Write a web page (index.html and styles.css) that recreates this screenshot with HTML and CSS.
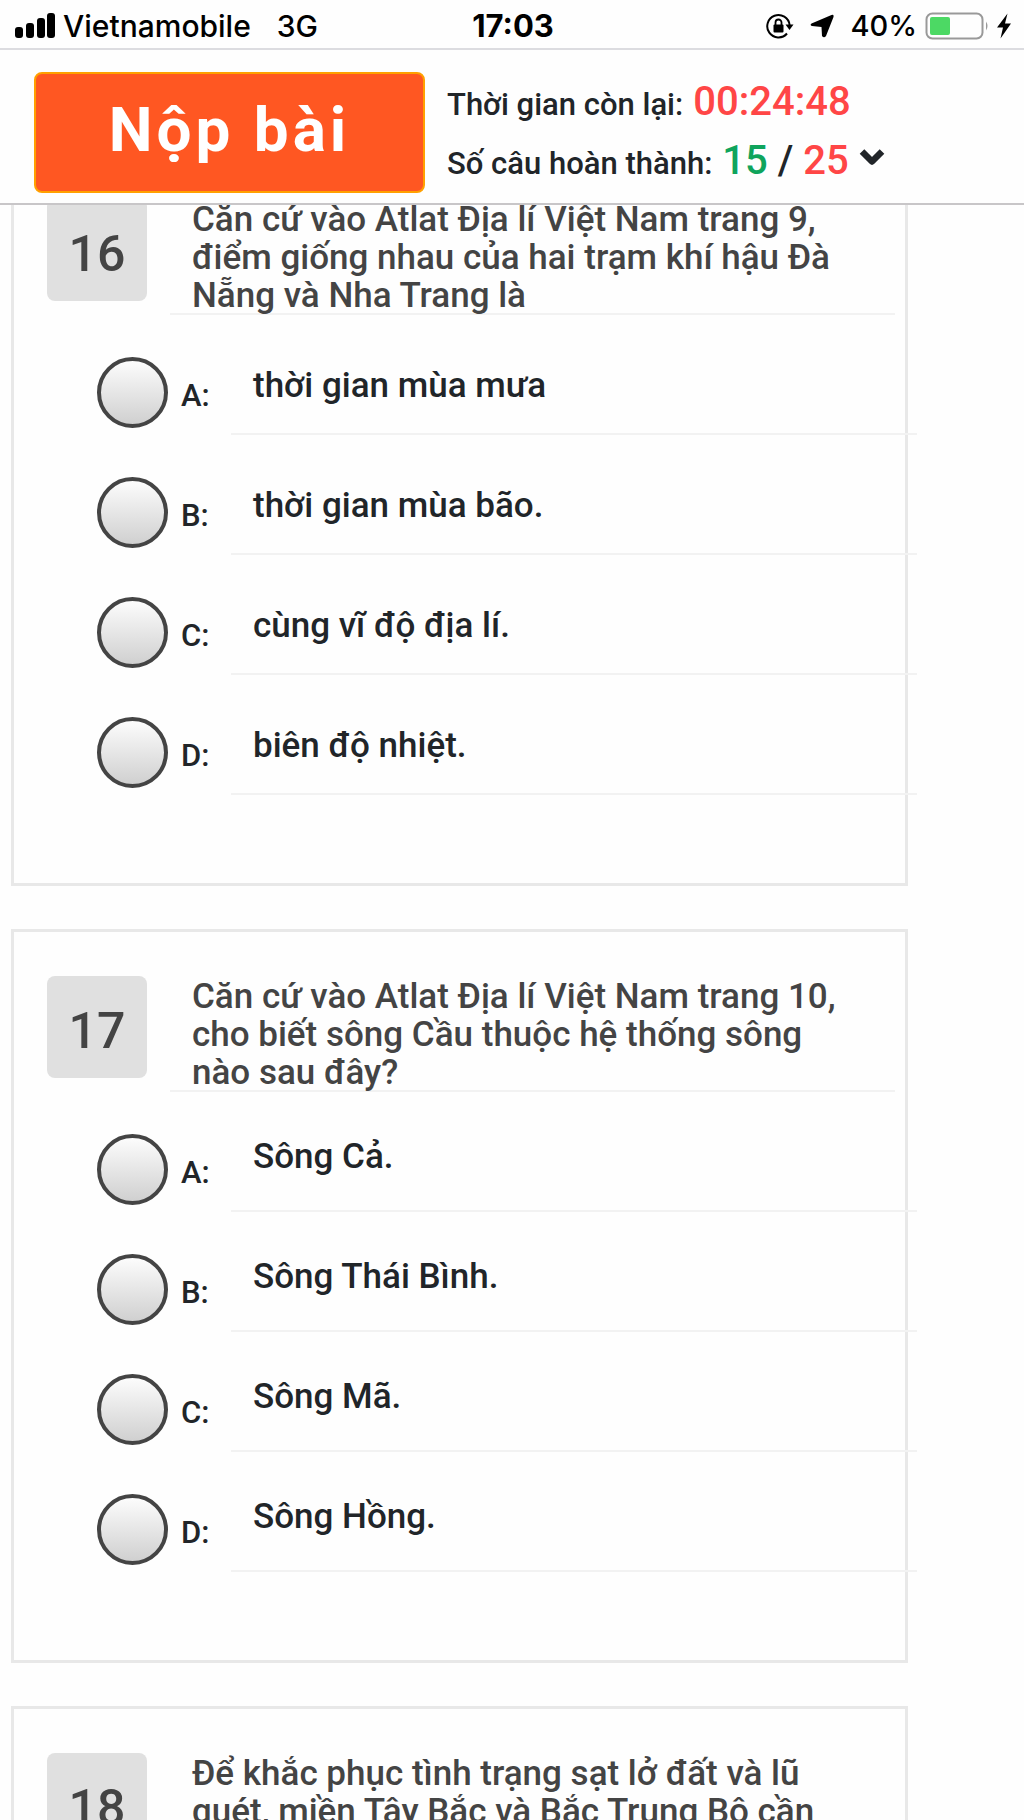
FILE: index.html
```html
<!DOCTYPE html>
<html lang="vi">
<head>
<meta charset="utf-8">
<meta name="viewport" content="width=device-width, initial-scale=1">
<title>Bài thi Địa lí</title>
<link rel="stylesheet" href="styles.css">
</head>
<body>
<div class="status">
  <div class="status-left">
    <svg width="40" height="25" viewBox="0 0 40 25" aria-hidden="true"><rect x="0" y="14" width="8" height="11" rx="3"/><rect x="11" y="10" width="8" height="15" rx="3"/><rect x="22" y="5" width="8" height="20" rx="3"/><rect x="32" y="0" width="8" height="25" rx="3"/></svg>
    <span class="carrier">Vietnamobile</span>
    <span>3G</span>
  </div>
  <div class="status-time">17:03</div>
  <div class="status-right">
    <svg width="28" height="26" viewBox="0 0 28 26" aria-hidden="true"><path d="M21 20.500A11.200 11.200 0 1 1 23.600 12" fill="none" stroke="#000" stroke-width="2"/><path d="M19.500 11.500h8L23.500 17z"/><rect x="7.500" y="11.500" width="10" height="8" rx="1"/><path d="M9.500 12V9.500a3 3 0 0 1 6 0V12" fill="none" stroke="#000" stroke-width="1.800"/></svg>
    <svg class="locate" width="24" height="24" viewBox="0 0 24 24" aria-hidden="true"><path d="M21.500 1Q24 0 23.500 3L16 22Q14 24.500 12 22L11.500 13L2 12Q-0.500 11 1.500 9.500z"/></svg>
    <span class="percent">40%</span>
    <svg class="battery" width="64" height="28" viewBox="0 0 64 28" aria-hidden="true"><rect x="1.500" y="1.500" width="56" height="25" rx="6" fill="none" stroke="#999" stroke-width="2"/><rect x="5" y="5" width="20" height="18" rx="2" fill="#4cd964"/><path d="M61 9.500q3 4.500 0 9z" fill="#999"/></svg>
    <svg width="14" height="26" viewBox="0 0 14 26" aria-hidden="true"><path d="M10.500 0.500L0 14.500h6L3.500 25.500L14 10.500H8z"/></svg>
  </div>
</div>
<header class="header">
  <button class="submit" type="button">Nộp bài</button>
  <div class="progress">
    <p class="progress-line"><span>Thời gian còn lại:</span><span class="big red">00:24:48</span></p>
    <p class="progress-line"><span>Số câu hoàn thành:</span><span class="big"><span class="green">15</span> / <span class="red">25</span></span>
      <svg width="26" height="26" viewBox="0 0 26 26" aria-hidden="true"><path d="M3 3.500L13 13.500L23 3.500" fill="none" stroke="#212529" stroke-width="6.500" stroke-linejoin="round"/></svg></p>
  </div>
</header>
<main class="quiz">
  <div class="list">
    <section class="card">
      <div class="question"><span class="number">16</span><h2 class="prompt">Căn cứ vào Atlat Địa lí Việt Nam trang 9, điểm giống nhau của hai trạm khí hậu Đà Nẵng và Nha Trang là</h2></div>
      <label class="option"><input type="radio" name="q16"><span class="letter">A:</span><span class="answer">thời gian mùa mưa</span></label>
      <label class="option"><input type="radio" name="q16"><span class="letter">B:</span><span class="answer">thời gian mùa bão.</span></label>
      <label class="option"><input type="radio" name="q16"><span class="letter">C:</span><span class="answer">cùng vĩ độ địa lí.</span></label>
      <label class="option"><input type="radio" name="q16"><span class="letter">D:</span><span class="answer">biên độ nhiệt.</span></label>
    </section>
    <section class="card card-raised">
      <div class="question"><span class="number">17</span><h2 class="prompt">Căn cứ vào Atlat Địa lí Việt Nam trang 10, cho biết sông Cầu thuộc hệ thống sông nào sau đây?</h2></div>
      <label class="option"><input type="radio" name="q17"><span class="letter">A:</span><span class="answer">Sông Cả.</span></label>
      <label class="option"><input type="radio" name="q17"><span class="letter">B:</span><span class="answer">Sông Thái Bình.</span></label>
      <label class="option"><input type="radio" name="q17"><span class="letter">C:</span><span class="answer">Sông Mã.</span></label>
      <label class="option"><input type="radio" name="q17"><span class="letter">D:</span><span class="answer">Sông Hồng.</span></label>
    </section>
    <section class="card">
      <div class="question"><span class="number">18</span><h2 class="prompt">Để khắc phục tình trạng sạt lở đất và lũ quét, miền Tây Bắc và Bắc Trung Bộ cần</h2></div>
    </section>
  </div>
</main>
</body>
</html>
```
FILE: styles.css
```css
* { box-sizing: border-box; }

body {
  margin: 0;
  height: 100vh;
  display: flex;
  flex-direction: column;
  overflow: hidden;
  background: #fefefe;
  color: #212529;
  font-family: Roboto, "Noto Sans", sans-serif;
  font-weight: 500;
}

/* Phone status bar */
.status {
  flex: none;
  display: grid;
  grid-template-columns: 1fr auto 1fr;
  align-items: center;
  height: 50px;
  padding: 3px 13px 0 15px;
  border-bottom: 2px solid #dcdce0;
  color: #000;
  font: 500 30px/34px Inter, "Liberation Sans", sans-serif;
}
.status-left, .status-right { display: flex; align-items: center; }
.status-right { justify-content: flex-end; }
.carrier { margin: 0 26px 0 8px; }
.status-time { font-size: 31px; font-weight: 700; }
.locate { margin: 0 16px; }
.percent { font-size: 29px; }
.battery { margin: 0 8px; }

/* Submit button and progress */
.header {
  flex: none;
  display: flex;
  align-items: center;
  gap: 22px;
  height: 155px;
  padding: 12px 34px 0;
  border-bottom: 2px solid #c8c6c8;
}
.submit {
  flex: none;
  width: 391px;
  height: 121px;
  padding: 0 0 6px;
  border: 2px solid #ffa000;
  border-radius: 8px;
  background: #ff5722;
  color: #fff;
  font: 700 62px/72px Roboto, "Noto Sans", sans-serif;
  letter-spacing: 4px;
}
.progress { padding-bottom: 4px; }
.progress-line {
  display: flex;
  align-items: baseline;
  gap: 10px;
  height: 59px;
  margin: 0;
  font-size: 31px;
  line-height: 59px;
  white-space: nowrap;
}
.big { font-size: 40px; }
.red { color: #ff4646; }
.green { color: #0fa45c; }

/* Scrolled question list */
.quiz { flex: 1; min-height: 0; overflow: hidden; }
.list {
  display: flex;
  flex-direction: column;
  gap: 43px;
  margin: -53px 116px 0 11px;
}
.card {
  padding: 44px 10px 88px 33px;
  border: 3px solid #e8e8e8;
}
.question {
  display: flex;
  gap: 23px;
  align-items: flex-start;
  margin-bottom: -2px;
}
.number {
  flex: none;
  width: 100px;
  padding-top: 8px;
  border-radius: 8px;
  background: #e0e0e0;
  color: #444;
  font-size: 50px;
  line-height: 94px;
  text-align: center;
}
/* The rule sits tight under the last line, across its descenders */
.prompt {
  flex: 1;
  margin: 0;
  padding: 2px 50px 0 22px;
  background: linear-gradient(#f2f2f2, #f2f2f2) 0 calc(100% - 0px) / 100% 2px no-repeat;
  color: #444;
  font-size: 35px;
  font-weight: 500;
  line-height: 38px;
}
.option {
  display: flex;
  align-items: flex-start;
  height: 120px;
  margin: 0 -22px 0 50px;
}
.question + .option { margin-top: 2px; }
.option input {
  appearance: none;
  flex: none;
  width: 71px;
  height: 71px;
  margin: 42px 13px 0 0;
  border: 4px solid #444;
  border-radius: 50%;
  background: linear-gradient(#fcfcfc, #d0d0d0);
}
.letter {
  flex: none;
  width: 50px;
  padding-top: 61px;
  font-size: 31px;
  line-height: 40px;
  white-space: nowrap;
}
.answer {
  flex: 1;
  align-self: stretch;
  padding: 51px 0 0 22px;
  border-bottom: 2px solid #f2f2f2;
  font-size: 35px;
  line-height: 40px;
}
.card-raised .answer { padding-top: 45px; }
```
